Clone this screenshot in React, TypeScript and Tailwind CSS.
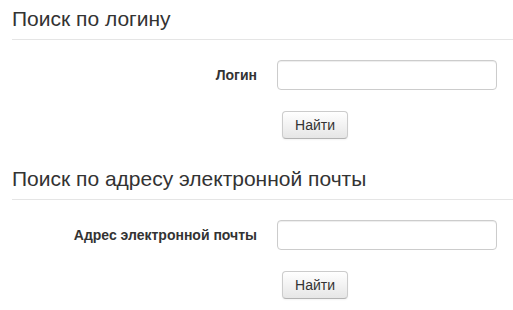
import React from 'react';

const font = { fontFamily: '"Liberation Sans", Arial, sans-serif' };

function Section({ title, label }: { title: string; label: string }) {
  return (
    <div className="pl-3">
      <div className="h-10 border-b border-[#e5e5e5] text-[21px] leading-[38px] text-[#333]">{title}</div>
      <div className="mt-5 flex items-center">
        <label className="w-[265px] pr-5 text-right text-[14px] font-bold text-[#333]">{label}</label>
        <input
          type="text"
          className="h-[30px] w-[220px] rounded-[4px] border border-[#ccc] bg-white px-1.5 shadow-[inset_0_1px_1px_rgba(0,0,0,0.075)] outline-none"
        />
      </div>
      <div className="mt-[21px] pl-[270px]">
        <button className="h-[28px] w-[66px] rounded-[4px] border border-[#ccc] border-b-[#b3b3b3] bg-gradient-to-b from-white to-[#e6e6e6] text-[14px] text-[#333] shadow-[inset_0_1px_0_rgba(255,255,255,0.2),0_1px_2px_rgba(0,0,0,0.05)]">
          Найти
        </button>
      </div>
    </div>
  );
}

export default function App() {
  return (
    <div className="h-[310px] w-[513px] overflow-hidden bg-white" style={font}>
      <Section title="Поиск по логину" label="Логин" />
      <div className="mt-[21px]">
        <Section title="Поиск по адресу электронной почты" label="Адрес электронной почты" />
      </div>
    </div>
  );
}
